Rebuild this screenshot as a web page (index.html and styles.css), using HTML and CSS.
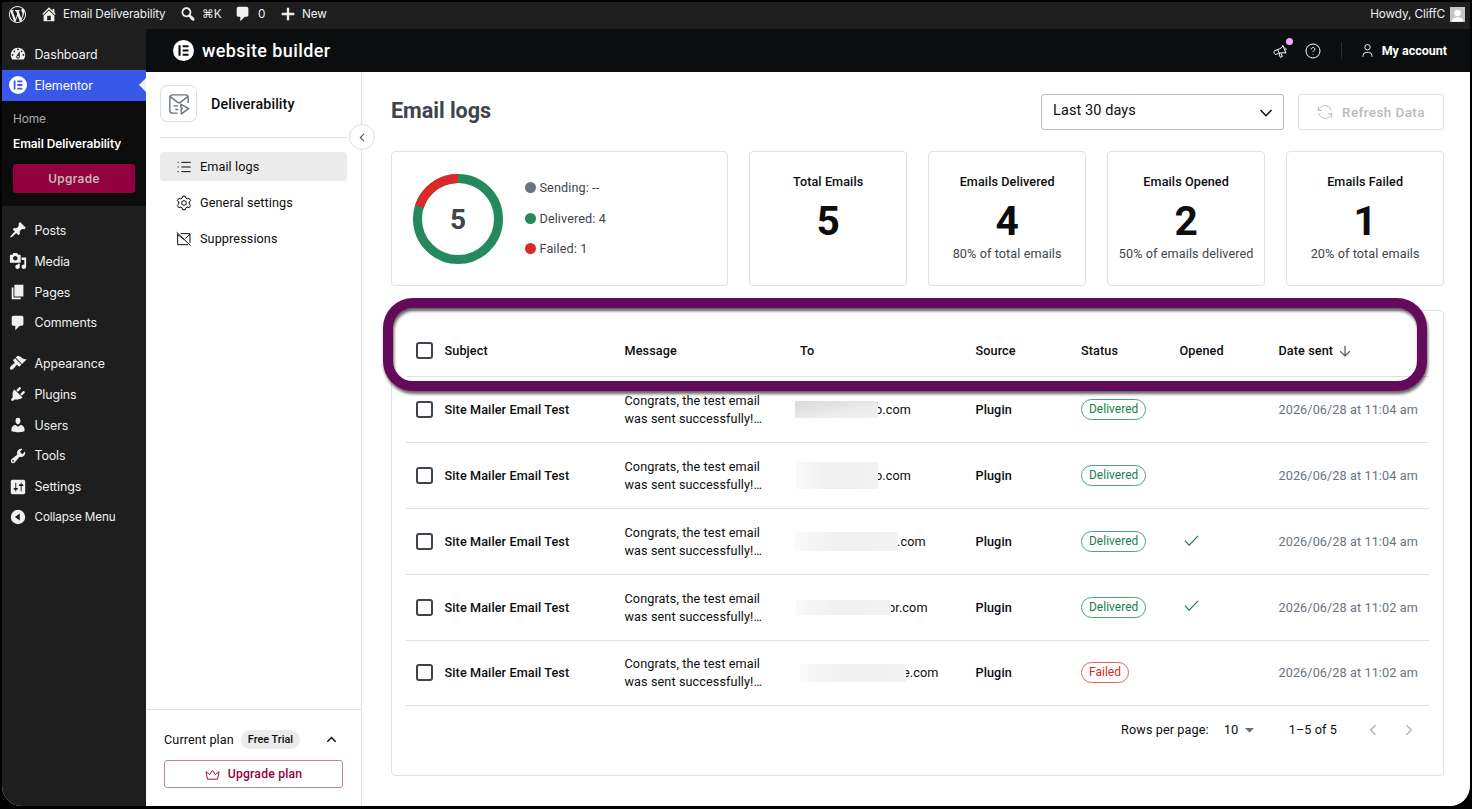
FILE: index.html
```html
<!DOCTYPE html>
<html lang="en">

<head>
  <meta charset="UTF-8">
  <meta name="viewport" content="width=device-width, initial-scale=1.0">
  <title>Email logs</title>
  <link rel="stylesheet" href="styles.css">
</head>

<body>
  <div class="window">
    <!-- WordPress admin bar -->
    <header class="adminbar">
      <svg class="wp-logo" viewBox="0 0 20 20"><path d="M20 10c0-5.51-4.49-10-10-10C4.48 0 0 4.49 0 10c0 5.52 4.48 10 10 10 5.51 0 10-4.48 10-10zM7.78 15.37L4.37 6.22c.55-.02 1.17-.08 1.17-.08.5-.06.44-1.13-.06-1.11 0 0-1.45.11-2.37.11-.18 0-.37 0-.58-.01C4.12 2.69 6.87 1.11 10 1.11c2.33 0 4.45.87 6.05 2.34-.68-.11-1.65.39-1.65 1.58 0 .74.45 1.36.9 2.1.35.61.55 1.36.55 2.46 0 1.49-1.4 5-1.4 5l-3.03-8.37c.54-.02.82-.17.82-.17.5-.05.44-1.25-.06-1.22 0 0-1.44.12-2.38.12-.87 0-2.33-.12-2.33-.12-.5-.03-.56 1.2-.06 1.22l.92.08 1.26 3.41zM17.41 10c.24-.64.74-1.87.43-4.25.7 1.29 1.05 2.71 1.05 4.25 0 3.29-1.73 6.24-4.4 7.78.97-2.59 1.94-5.2 2.92-7.78zM6.1 18.09C3.12 16.65 1.11 13.53 1.11 10c0-1.3.23-2.48.72-3.59C3.25 10.3 4.67 14.2 6.1 18.09zm4.03-6.63l2.58 6.98c-.86.29-1.76.45-2.71.45-.79 0-1.57-.11-2.29-.33.81-2.38 1.62-4.74 2.42-7.1z"/></svg>
      <span class="bar-item bar-site"><svg viewBox="0 0 20 20"><path d="M16 8.5l1.53 1.53-1.06 1.06L10 4.6l-6.47 6.49-1.06-1.06L10 2.5l4 4v-2h2v4zm-6-2.46l6 5.99V18H4v-5.97zM12 17v-5H8v5h4z"/></svg>Email Deliverability</span>
      <span class="bar-item bar-search"><svg viewBox="0 0 20 20"><path d="M12.14 4.18c1.87 1.87 2.11 4.75.72 6.89.12.1.22.21.36.31.2.16.47.36.81.59.34.24.56.39.66.47.42.31.73.57.94.78.32.32.6.65.84 1 .25.35.44.69.59 1.04.14.35.21.68.18 1-.02.32-.14.59-.36.81s-.49.34-.81.36c-.31.02-.65-.04-.99-.19-.35-.14-.7-.34-1.04-.59-.35-.24-.68-.52-1-.84-.21-.21-.47-.52-.77-.93-.1-.13-.25-.35-.47-.66-.22-.32-.4-.57-.56-.78-.16-.2-.29-.35-.44-.5-2.07 1.09-4.69.76-6.44-.98-2.14-2.15-2.14-5.64 0-7.78 2.15-2.15 5.63-2.15 7.78 0zm-1.41 6.36c1.36-1.37 1.36-3.58 0-4.95-1.37-1.37-3.59-1.37-4.95 0-1.37 1.37-1.37 3.58 0 4.95 1.36 1.37 3.58 1.37 4.95 0z"/></svg>⌘K</span>
      <span class="bar-item bar-comments"><svg viewBox="0 0 20 20"><path d="M5 2h9c1.1 0 2 .9 2 2v7c0 1.1-.9 2-2 2h-2l-5 5v-5H5c-1.1 0-2-.9-2-2V4c0-1.1.9-2 2-2z"/></svg>0</span>
      <span class="bar-item bar-new"><svg viewBox="0 0 20 20"><path d="M17 8.7v2.6h-5.7V17H8.7v-5.7H3V8.7h5.7V3h2.6v5.7H17z"/></svg>New</span>
      <span class="howdy">Howdy, CliffC
        <svg class="avatar" viewBox="0 0 16 16"><rect width="16" height="16" fill="#c4c4c4"/><circle cx="8" cy="6.3" r="3.5" fill="#fff"/><path d="M2 15.5c0-3.5 3-4.5 6-4.5s6 1 6 4.5z" fill="#fff"/></svg>
      </span>
    </header>

    <div class="body">
      <!-- Admin menu -->
      <nav class="adminmenu">
        <a class="menu-item"><svg viewBox="0 0 20 20"><path d="M3.76 16h12.48c1.1-1.37 1.76-3.11 1.76-5 0-4.42-3.58-8-8-8s-8 3.58-8 8c0 1.89.66 3.63 1.76 5zM10 4c.55 0 1 .45 1 1s-.45 1-1 1-1-.45-1-1 .45-1 1-1zM6 6c.55 0 1 .45 1 1s-.45 1-1 1-1-.45-1-1 .45-1 1-1zm8 0c.55 0 1 .45 1 1s-.45 1-1 1-1-.45-1-1 .45-1 1-1zm-5.37 5.55L12 7v6c0 1.1-.9 2-2 2s-2-.9-2-2c0-.57.24-1.08.63-1.45zM4 10c.55 0 1 .45 1 1s-.45 1-1 1-1-.45-1-1 .45-1 1-1zm12 0c.55 0 1 .45 1 1s-.45 1-1 1-1-.45-1-1 .45-1 1-1zm-5 3c0-.55-.45-1-1-1s-1 .45-1 1 .45 1 1 1 1-.45 1-1z"/></svg>Dashboard</a>
        <a class="menu-item current"><svg viewBox="0 0 20 20"><circle cx="10" cy="10" r="10"/><path class="cut" d="M5.2 5h2v10h-2zM9.2 5h5.6v2H9.200zM9.200 9h5.600v2H9.200zM9.200 13h5.600v2H9.200z"/></svg>Elementor</a>
        <div class="submenu">
          <a>Home</a>
          <a class="active">Email Deliverability</a>
          <button class="upgrade">Upgrade</button>
        </div>
        <a class="menu-item"><svg viewBox="0 0 20 20"><path d="M10.44 3.02l1.82-1.82 6.36 6.35-1.83 1.82c-1.05-.68-2.48-.57-3.41.36l-.75.75c-.92.93-1.04 2.35-.35 3.41l-1.83 1.82-2.41-2.41-2.8 2.79c-.42.42-3.38 2.71-3.8 2.29s1.86-3.39 2.28-3.81l2.79-2.79L4.1 9.36l1.83-1.82c1.05.69 2.48.57 3.4-.36l.75-.75c.93-.92 1.05-2.35.36-3.41z"/></svg>Posts</a>
        <a class="menu-item"><svg viewBox="0 0 20 20"><path d="M13 11V4c0-.55-.45-1-1-1h-1.67L9 1H5L3.67 3H2c-.55 0-1 .45-1 1v7c0 .55.45 1 1 1h10c.55 0 1-.45 1-1zM7 4.5c1.38 0 2.5 1.12 2.5 2.5S8.38 9.5 7 9.5 4.5 8.38 4.5 7 5.62 4.5 7 4.5zM14 6h5v10.5c0 1.38-1.12 2.5-2.5 2.5S14 17.88 14 16.5s1.12-2.5 2.5-2.5c.17 0 .34.02.5.05V9h-3V6zm-4 8.05V13h2v3.5c0 1.38-1.12 2.5-2.5 2.5S7 17.88 7 16.5 8.12 14 9.5 14c.17 0 .34.02.5.05z"/></svg>Media</a>
        <a class="menu-item"><svg viewBox="0 0 20 20"><path d="M6 15V2h10v13H6zm-1 1h8v2H3V5h2v11z"/></svg>Pages</a>
        <a class="menu-item"><svg viewBox="0 0 20 20"><path d="M5 2h9c1.1 0 2 .9 2 2v7c0 1.1-.9 2-2 2h-2l-5 5v-5H5c-1.1 0-2-.9-2-2V4c0-1.1.9-2 2-2z"/></svg>Comments</a>
        <a class="menu-item spaced"><svg viewBox="0 0 20 20"><path d="M14.48 11.06L7.41 3.99l1.5-1.5c.5-.56 2.3-.47 3.51.32 1.21.8 1.43 1.28 2.91 2.1 1.18.64 2.45 1.26 4.45.85zm-.71.71L6.7 4.7 4.93 6.47c-.39.39-.39 1.02 0 1.41l1.06 1.06c.39.39.39 1.03 0 1.42-.6.6-1.43 1.11-2.21 1.69-.35.26-.7.53-1.01.84C1.43 14.23.4 16.08 1.4 17.07c.99 1 2.84-.03 4.18-1.36.31-.31.58-.66.85-1.02.57-.78 1.08-1.61 1.69-2.21.39-.39 1.02-.39 1.41 0l1.06 1.06c.39.39 1.02.39 1.41 0z"/></svg>Appearance</a>
        <a class="menu-item"><svg viewBox="0 0 20 20"><path d="M13.11 4.36L9.87 7.6 8 5.73l3.24-3.24c.35-.34 1.05-.2 1.56.32.52.51.66 1.21.31 1.55zm-8 1.77l.91-1.12 9.01 9.01-1.19.84c-.71.71-2.63 1.16-3.82 1.16H6.14L4.9 17.26c-.59.59-1.54.59-2.12 0-.59-.58-.59-1.53 0-2.12l1.24-1.24v-3.88c0-1.13.4-3.19 1.09-3.89zm7.26 3.97l3.24-3.24c.34-.35 1.04-.21 1.55.31.52.51.66 1.21.31 1.55l-3.24 3.25z"/></svg>Plugins</a>
        <a class="menu-item"><svg viewBox="0 0 20 20"><path d="M10 9.25c-2.27 0-2.73-3.44-2.73-3.44C7 4.02 7.82 2 9.97 2c2.16 0 2.98 2.02 2.71 3.81 0 0-.41 3.44-2.68 3.44zm0 2.57L12.72 10c2.39 0 4.52 2.33 4.52 4.53v2.49s-3.65 1.13-7.24 1.13c-3.65 0-7.24-1.13-7.24-1.13v-2.49c0-2.25 1.94-4.48 4.47-4.48z"/></svg>Users</a>
        <a class="menu-item"><svg viewBox="0 0 20 20"><path d="M16.68 9.77c-1.34 1.34-3.3 1.67-4.95.99l-5.41 6.52c-.99.99-2.59.99-3.58 0s-.99-2.59 0-3.57l6.52-5.42c-.68-1.65-.35-3.61.99-4.95 1.28-1.28 3.12-1.62 4.72-1.06l-2.89 2.89 2.82 2.82 2.86-2.87c.53 1.58.18 3.39-1.08 4.65zM3.81 16.21c.4.39 1.04.39 1.43 0 .4-.4.4-1.04 0-1.43-.39-.4-1.03-.4-1.43 0-.39.39-.39 1.03 0 1.43z"/></svg>Tools</a>
        <a class="menu-item"><svg viewBox="0 0 20 20"><path d="M18 16V4c0-1.1-.9-2-2-2H4c-1.1 0-2 .9-2 2v12c0 1.1.9 2 2 2h12c1.1 0 2-.9 2-2zM8 11h1c.55 0 1 .45 1 1s-.45 1-1 1H8v1.5c0 .28-.22.5-.5.5s-.5-.22-.5-.5V13H6c-.55 0-1-.45-1-1s.45-1 1-1h1V5.5c0-.28.22-.5.5-.5s.5.22.5.5V11zm5-2h-1c-.55 0-1-.45-1-1s.45-1 1-1h1V5.5c0-.28.22-.5.5-.5s.5.22.5.5V7h1c.55 0 1 .45 1 1s-.45 1-1 1h-1v5.5c0 .28-.22.5-.5.5s-.5-.22-.5-.5V9z"/></svg>Settings</a>
        <a class="menu-item collapse"><svg viewBox="0 0 20 20"><path fill-rule="evenodd" d="M10 2a8 8 0 100 16 8 8 0 000-16zm2 4.2v7.6L6.5 10z"/></svg>Collapse Menu</a>
      </nav>

      <div class="app">
        <!-- Elementor top bar -->
        <div class="topbar">
          <svg class="e-logo" viewBox="0 0 20 20"><circle cx="10" cy="10" r="10"/><path class="cut" d="M5.2 5h2v10h-2zM9.2 5h5.6v2H9.2zM9.2 9h5.6v2H9.2zM9.2 13h5.6v2H9.2z"/></svg>
          <span class="brand">website builder</span>
          <span class="whats-new">
            <svg class="line" viewBox="0 0 24 24"><path d="M16 3l5 12.500M16.500 4.500C13.500 9 9 9.500 4 11.500a2 2 0 00-1 2.700l.8 1.800a2 2 0 002.700 1c4.500-2.200 8.500-3 14-2M8.500 10l3 6.500M10.500 16l2 5.500 3-1.300-2-4.700M19 7a2.600 2.600 0 011.600 4"/></svg>
            <i class="dot"></i>
          </span>
          <svg class="line help" viewBox="0 0 24 24"><circle cx="12" cy="12" r="10.5"/><path d="M9.3 9.6c0-1.8 1.2-2.8 2.8-2.8s2.7 1 2.7 2.5c0 2-2.7 2.2-2.7 4.3M12.1 16.3v1"/></svg>
          <i class="divider"></i>
          <svg class="line person" viewBox="0 0 24 24"><circle cx="12" cy="6.8" r="4.3"/><path d="M4.8 22v-1.5a5.500 5.500 0 015.500-5.500h3.400a5.500 5.500 0 015.500 5.500V22"/></svg>
          <b>My account</b>
        </div>

        <div class="columns">
          <!-- Deliverability side panel -->
          <aside class="panel">
            <div class="panel-head">
              <span class="panel-icon"><svg class="line" viewBox="0 0 24 24"><path d="M10.5 22H5a3 3 0 01-3-3V5a3 3 0 013-3h14a3 3 0 013 3v6M2.500 4l8 6.200a2.500 2.500 0 003 0L21.500 4M6 14h5M8 18h3"/><path d="M14 12.500l8.500 4.500-7.800 5.800-.5-4.800 1.300-1.200-1.500-.8z"/></svg></span>
              <span>Deliverability</span>
            </div>
            <button class="panel-toggle"><svg class="line" viewBox="0 0 10 10"><path d="M6.500 1.500L3 5l3.500 3.500"/></svg></button>
            <nav class="panel-nav">
              <a class="selected"><svg class="line" viewBox="0 0 24 24"><path d="M8 5h14M8 12h14M8 19h14M2.500 5h1.600M2.500 12h1.600M2.500 19h1.600"/></svg>Email logs</a>
              <a><svg class="line" viewBox="0 0 24 24"><path d="M10 1.800h4l.8 2.900 2 1.100 2.900-1 2.200 3.600-2 2.200v2.800l2 2.200-2.200 3.600-2.900-1-2 1.100-.8 2.900h-4l-.8-2.900-2-1.100-2.900 1-2.200-3.600 2-2.200v-2.800l-2-2.200 2.200-3.600 2.900 1 2-1.100z"/><circle cx="12" cy="12" r="3.500"/></svg>General settings</a>
              <a class="suppressions"><svg class="line" viewBox="0 0 24 24"><path d="M7 4h14v14M18 20.500H2.500V4M21 5l-7 6M2.500 5.500l9.500 7M1 2l21 20"/></svg>Suppressions</a>
            </nav>
            <div class="plan">
              <div class="plan-row">
                <span>Current plan</span>
                <span class="chip">Free Trial</span>
                <svg class="line" viewBox="0 0 10 10"><path d="M1.200 7L5 3.200 8.800 7"/></svg>
              </div>
              <button class="upgrade-plan"><svg class="line" viewBox="0 0 24 24"><path d="M12 5.500l4.500 6.500 6-4.500-2.500 12H4L1.500 7.500l6 4.500z"/></svg>Upgrade plan</button>
            </div>
          </aside>

          <main class="main">
            <div class="title-row">
              <h1>Email logs</h1>
              <div class="select">Last 30 days<svg class="line" viewBox="0 0 14 14"><path d="M1.500 4L7 9.700 12.500 4"/></svg></div>
              <button class="refresh"><svg class="line" viewBox="0 0 24 24"><path d="M21.500 10A9.800 9.800 0 003.500 7.200L2 9.500M2 3.500v6h5.500M2.500 14a9.800 9.800 0 0018 2.800l1.500-2.300M22 20.500v-6h-5.500"/></svg>Refresh Data</button>
            </div>

            <!-- Summary cards -->
            <section class="stats">
              <div class="card overview">
                <svg class="donut" viewBox="0 0 90 90">
                  <circle cx="45" cy="45" r="40.5" stroke="#248a5e"/>
                  <circle cx="45" cy="45" r="40.5" stroke="#dc2828" pathLength="100" stroke-dasharray="20 80" transform="rotate(-162 45 45)"/>
                  <text x="45" y="54.5">5</text>
                </svg>
                <ul class="legend">
                  <li><i class="gray"></i>Sending: --</li>
                  <li><i class="green"></i>Delivered: 4</li>
                  <li><i class="red"></i>Failed: 1</li>
                </ul>
              </div>
              <div class="card"><h2>Total Emails</h2><strong>5</strong></div>
              <div class="card"><h2>Emails Delivered</h2><strong>4</strong><p>80% of total emails</p></div>
              <div class="card"><h2>Emails Opened</h2><strong>2</strong><p>50% of emails delivered</p></div>
              <div class="card"><h2>Emails Failed</h2><strong>1</strong><p>20% of total emails</p></div>
            </section>

            <!-- Log table -->
            <section class="logs">
              <div class="row head">
                <i class="checkbox"></i><span>Subject</span><span>Message</span><span>To</span><span>Source</span><span>Status</span><span>Opened</span>
                <span class="sorted">Date sent<svg class="line" viewBox="0 0 12 12"><path d="M6 .8v10.200M1.200 6.300L6 11l4.800-4.700"/></svg></span>
              </div>
              <div class="row">
                <i class="checkbox"></i><b>Site Mailer Email Test</b><span class="message">Congrats, the test email was sent successfully!…</span><span class="to"><i class="mask mask-1"></i>o.com</span><b>Plugin</b><span><em class="pill">Delivered</em></span><span></span><time>2026/06/28 at 11:04 am</time>
              </div>
              <div class="row">
                <i class="checkbox"></i><b>Site Mailer Email Test</b><span class="message">Congrats, the test email was sent successfully!…</span><span class="to"><i class="mask mask-2"></i>o.com</span><b>Plugin</b><span><em class="pill">Delivered</em></span><span></span><time>2026/06/28 at 11:04 am</time>
              </div>
              <div class="row">
                <i class="checkbox"></i><b>Site Mailer Email Test</b><span class="message">Congrats, the test email was sent successfully!…</span><span class="to"><i class="mask mask-3"></i>.com</span><b>Plugin</b><span><em class="pill">Delivered</em></span><span class="opened"><svg class="line" viewBox="0 0 16 12"><path d="M1 6l4.500 4.800L15 1"/></svg></span><time>2026/06/28 at 11:04 am</time>
              </div>
              <div class="row">
                <i class="checkbox"></i><b>Site Mailer Email Test</b><span class="message">Congrats, the test email was sent successfully!…</span><span class="to"><i class="mask mask-4"></i>or.com</span><b>Plugin</b><span><em class="pill">Delivered</em></span><span class="opened"><svg class="line" viewBox="0 0 16 12"><path d="M1 6l4.500 4.800L15 1"/></svg></span><time>2026/06/28 at 11:02 am</time>
              </div>
              <div class="row">
                <i class="checkbox"></i><b>Site Mailer Email Test</b><span class="message">Congrats, the test email was sent successfully!…</span><span class="to"><i class="mask mask-5"></i>e.com</span><b>Plugin</b><span><em class="pill failed">Failed</em></span><span></span><time>2026/06/28 at 11:02 am</time>
              </div>
              <div class="pager">
                <span>Rows per page:</span>
                <span class="per-page">10<svg viewBox="0 0 8 4"><path d="M0 0h8L4 4z"/></svg></span>
                <span class="range">1–5 of 5</span>
                <svg class="line arrow" viewBox="0 0 12 12"><path d="M8.500 1.200L3.700 6l4.800 4.800"/></svg>
                <svg class="line arrow" viewBox="0 0 12 12"><path d="M3.500 1.200L8.300 6l-4.800 4.800"/></svg>
              </div>
              <div class="highlight"></div>
            </section>
          </main>
        </div>
      </div>
    </div>
  </div>
</body>

</html>
```
FILE: styles.css
```css
* {
  box-sizing: border-box;
}

body {
  margin: 0;
  padding: 2px 2px 3px;
  height: 809px;
  background: #000;
  color: #0c0d0e;
  font-family: Roboto, sans-serif;
  font-size: 12.65px;
  letter-spacing: 0.1px;
  overflow: hidden;
}

h1, h2, p, ul {
  margin: 0;
  padding: 0;
  list-style: none;
}

button {
  padding: 0;
  font: inherit;
  letter-spacing: inherit;
}

svg {
  flex: none;
  fill: currentColor;
}

.line {
  fill: none;
  stroke: currentColor;
  stroke-width: 1.5;
}

.cut {
  fill: #0c0d0e;
}

.window {
  height: 804px;
  display: flex;
  flex-direction: column;
  background: #fff;
  border-radius: 0 0 20px 20px;
  overflow: hidden;
}

/* Admin bar */
.adminbar {
  height: 27px;
  display: flex;
  align-items: center;
  padding: 0 5px 3px 7px;
  background: #1e1e1e;
  color: #f0f0f1;
  font-family: Inter, sans-serif;
  font-size: 11.75px;
  letter-spacing: -0.1px;
}

.wp-logo {
  width: 17px;
  height: 17px;
}

.bar-item {
  display: flex;
  align-items: center;
}

.bar-item svg {
  width: 18px;
  height: 18px;
  margin-right: 5px;
}

.bar-site {
  width: 139px;
  margin-left: 14px;
  white-space: nowrap;
}

.bar-search {
  width: 55px;
}

.bar-comments {
  width: 45px;
}

.bar-comments svg {
  margin-right: 6px;
}

.howdy {
  display: flex;
  align-items: center;
  gap: 5px;
  margin-left: auto;
}

.avatar {
  width: 15px;
  height: 15px;
}

.body {
  flex: 1;
  display: flex;
  min-height: 0;
}

/* Admin menu */
.adminmenu {
  width: 144px;
  padding-top: 10px;
  background: #1e1e1e;
  color: #f0f0f1;
  font-family: Inter, sans-serif;
  font-size: 12.4px;
  letter-spacing: -0.1px;
}

.menu-item {
  height: 30.8px;
  display: flex;
  align-items: center;
  gap: 7.5px;
  padding-left: 7px;
}

.menu-item svg {
  width: 18px;
  height: 18px;
}

.current {
  position: relative;
  background: #3858e9;
  color: #fff;
}

.current .cut {
  fill: #3858e9;
}

.current::after {
  content: "";
  position: absolute;
  right: 0;
  border: 7px solid transparent;
  border-right-color: #f0f0f1;
  border-left: 0;
}

.submenu {
  height: 105px;
  display: flex;
  flex-direction: column;
  margin-bottom: 9.5px;
  padding: 10px 11px 0;
  background: #0c0c0d;
  font-size: 11.9px;
  line-height: 16px;
  color: #a9a9ab;
}

.submenu .active {
  margin: 9px 0 12px;
  color: #fff;
  font-weight: 600;
  letter-spacing: -0.05px;
  white-space: nowrap;
}

.upgrade {
  height: 29px;
  padding-top: 1px;
  border: 0;
  border-radius: 3px;
  background: #93003f;
  color: #c3b6bc;
  font-weight: 600;
  letter-spacing: 0.3px;
}

.spaced {
  margin-top: 9.8px;
}

.collapse {
  height: 29px;
  font-size: 11.7px;
}

/* Top bar */
.app {
  flex: 1;
  display: flex;
  flex-direction: column;
}

.topbar {
  height: 43px;
  display: flex;
  align-items: center;
  padding: 0 23px 0 27px;
  background: #0c0d0e;
  color: #fff;
}

.topbar b {
  margin-bottom: 1px;
  font-size: 12.5px;
  font-weight: 700;
  letter-spacing: 0;
}

.e-logo {
  width: 21px;
  height: 21px;
}

.brand {
  margin-left: 8px;
  font-size: 18px;
  font-weight: 500;
  letter-spacing: 0.4px;
}

.whats-new {
  position: relative;
  height: 16px;
  margin-left: auto;
}

.whats-new svg,
.help {
  width: 16px;
  height: 16px;
}

.dot {
  position: absolute;
  top: -5px;
  right: -5px;
  width: 7px;
  height: 7px;
  border-radius: 50%;
  background: #f0abfc;
}

.help {
  margin-left: 17px;
}

.divider {
  width: 1px;
  height: 17px;
  margin: 0 18px 0 20px;
  background: #2c2d2f;
}

.person {
  width: 15px;
  height: 15px;
  margin-right: 7px;
}

.columns {
  flex: 1;
  display: flex;
}

/* Side panel */
.panel {
  position: relative;
  width: 216px;
  display: flex;
  flex-direction: column;
  border-right: 1px solid #dfe0e1;
}

.panel-head {
  height: 66px;
  display: flex;
  align-items: center;
  gap: 14px;
  margin: 0 14px;
  padding-bottom: 2px;
  border-bottom: 1px solid #e0e1e2;
  font-size: 14.3px;
  font-weight: 500;
}

.panel-icon {
  width: 37px;
  height: 37px;
  display: grid;
  place-items: center;
  border: 1px solid #dcdddf;
  border-radius: 7px;
  color: #69727d;
}

.panel-icon svg {
  width: 22px;
  height: 22px;
}

.panel-toggle {
  position: absolute;
  top: 52px;
  right: -14px;
  width: 26px;
  height: 26px;
  display: grid;
  place-items: center;
  border: 1px solid #dcdddf;
  border-radius: 50%;
  background: #fff;
  color: #515962;
}

.panel-toggle svg {
  width: 11px;
  stroke-width: 1;
}

.panel-nav {
  display: flex;
  flex-direction: column;
  gap: 7px;
  padding: 14px;
}

.panel-nav a {
  height: 29px;
  display: flex;
  align-items: center;
  gap: 8px;
  padding-left: 16px;
  border-radius: 4px;
}

.panel-nav svg {
  width: 16px;
  height: 16px;
}

.panel-nav .selected {
  background: #ebebeb;
}

.plan {
  height: 97px;
  margin-top: auto;
  padding: 20px 18px 0;
  border-top: 1px solid #dfe0e1;
}

.plan-row {
  height: 19px;
  display: flex;
  align-items: center;
  margin-bottom: 11px;
}

.plan-row svg {
  width: 11px;
  margin: 0 6px 0 auto;
  stroke-width: 1.3;
}

.chip {
  margin-left: 7px;
  padding: 0 7px;
  border-radius: 10px;
  background: #ebebeb;
  font-size: 10.9px;
  font-weight: 500;
  letter-spacing: 0;
  line-height: 19px;
}

.upgrade-plan {
  width: 179px;
  height: 28px;
  display: flex;
  align-items: center;
  justify-content: center;
  gap: 8px;
  border: 1px solid #c9809f;
  border-radius: 3px;
  background: #fff;
  color: #93003f;
  font-size: 12.2px;
  font-weight: 500;
  letter-spacing: 0.2px;
}

.upgrade-plan svg {
  width: 15px;
}

/* Main column */
.main {
  flex: 1;
  padding: 22px 26px 0 29px;
}

.title-row {
  height: 36px;
  display: flex;
  align-items: center;
}

h1 {
  flex: 1;
  padding-bottom: 3px;
  color: #3f444b;
  font-size: 21.6px;
  font-weight: 700;
  letter-spacing: -0.05px;
}

.select {
  width: 243px;
  height: 36px;
  display: flex;
  align-items: center;
  justify-content: space-between;
  padding: 0 10px 3px 11px;
  border: 1px solid #babbbd;
  border-radius: 3px;
  font-size: 14.5px;
}

.select svg {
  width: 14px;
  margin-top: 5px;
}

.refresh {
  width: 146px;
  height: 36px;
  display: flex;
  align-items: center;
  justify-content: center;
  gap: 9px;
  margin-left: 14px;
  padding-bottom: 1px;
  border: 1px solid #dfe0e1;
  border-radius: 3px;
  background: #fff;
  color: #babbbd;
  font-size: 13.5px;
  font-weight: 500;
  letter-spacing: 0.4px;
}

.refresh svg {
  width: 16px;
}

.stats {
  height: 135px;
  display: grid;
  grid-template-columns: 337px repeat(4, 1fr);
  gap: 21.3px;
  margin-top: 21px;
}

.card {
  padding-top: 22px;
  border: 1px solid #dfe0e1;
  border-radius: 4px;
  text-align: center;
}

.card h2 {
  font-size: 12.6px;
  font-weight: 500;
  line-height: 16px;
}

.card strong {
  display: block;
  margin: 7px 0 1px;
  font-size: 40.7px;
  line-height: 48px;
}

.card p {
  color: #3f444b;
  line-height: 16px;
  white-space: nowrap;
}

.overview {
  display: flex;
  align-items: center;
  gap: 22px;
  padding: 0 21px;
}

.donut {
  width: 90px;
  height: 90px;
}

.donut circle {
  fill: none;
  stroke-width: 9;
}

.donut text {
  fill: #3f444b;
  font-size: 28px;
  font-weight: 700;
  text-anchor: middle;
}

.legend {
  padding-bottom: 1px;
}

.legend li {
  height: 30.5px;
  display: flex;
  align-items: center;
  gap: 3.5px;
  color: #3f444b;
}

.legend i {
  width: 11px;
  height: 11px;
  border-radius: 50%;
}

.gray {
  background: #69727d;
}

.green {
  background: #248a5e;
}

.red {
  background: #dc2828;
}

/* Log table */
.logs {
  position: relative;
  height: 466px;
  margin-top: 24px;
  padding: 14px 14px 0;
  border: 1px solid #dfe0e1;
  border-radius: 4px;
}

.row {
  height: 65.8px;
  display: grid;
  grid-template-columns: 38.5px 180px 175.5px 175.5px 105.5px 98.5px 99px 1fr;
  align-items: center;
  border-bottom: 1px solid #dfe0e1;
}

.head {
  height: 52.4px;
  font-weight: 500;
}

.row b {
  font-weight: 500;
}

.checkbox {
  width: 17px;
  height: 17px;
  margin-left: 10px;
  border: 2px solid #3f444b;
  border-radius: 3px;
}

.message {
  width: 150px;
  padding-top: 1px;
  line-height: 18px;
}

.sorted {
  display: flex;
  align-items: center;
  gap: 6px;
}

.sorted svg {
  width: 12px;
  color: #515962;
  stroke-width: 1.2;
}

.to {
  display: flex;
  align-items: center;
  margin-left: -5px;
}

.mask {
  z-index: 1;
  margin-right: -3px;
  background: linear-gradient(90deg, #fafafa, #f0f0f0 40%, #f2f2f2);
}

.mask-1 {
  width: 83px;
  height: 17px;
  background: linear-gradient(170deg, #dad8da, #ebebeb 60%, #f1f1f1);
}

.mask-2 {
  width: 82px;
  height: 27px;
  margin-left: 1px;
}

.mask-3 {
  width: 103px;
  height: 19px;
  margin-right: -1px;
}

.mask-4 {
  width: 95px;
  height: 15px;
  margin-left: 1px;
}

.mask-5 {
  width: 106px;
  height: 18px;
  margin-left: 5px;
}

.pill {
  display: inline-block;
  padding: 0 7px;
  border: 1px solid #4ba380;
  border-radius: 11px;
  color: #15804f;
  font-size: 11.9px;
  font-style: normal;
  letter-spacing: 0.05px;
  line-height: 19px;
}

.failed {
  border-color: #e36060;
  color: #dc2626;
}

.opened {
  padding-left: 4px;
  color: #15804f;
}

.opened svg {
  width: 15px;
  stroke-width: 1.3;
}

.row time {
  color: #69727d;
  white-space: nowrap;
}

.pager {
  height: 47px;
  display: flex;
  align-items: center;
  justify-content: flex-end;
  padding-right: 14px;
}

.per-page {
  width: 80px;
  display: flex;
  align-items: center;
  gap: 6px;
  padding: 0 0 1px 15px;
  font-size: 13px;
}

.per-page svg {
  width: 9px;
  margin-top: 2px;
  color: #6b6c6e;
}

.range {
  margin-right: 30px;
}

.arrow {
  width: 12px;
  margin-left: 24px;
  color: #b5b6b7;
}

.range + .arrow {
  margin-left: 0;
}

/* Callout ring drawn over the table header */
.highlight {
  position: absolute;
  top: -13px;
  left: -9px;
  width: 1044px;
  height: 93px;
  border: 10px solid #640a5a;
  border-radius: 30px;
  filter: drop-shadow(1px 3px 1.5px rgba(0, 0, 0, 0.6));
}
```
